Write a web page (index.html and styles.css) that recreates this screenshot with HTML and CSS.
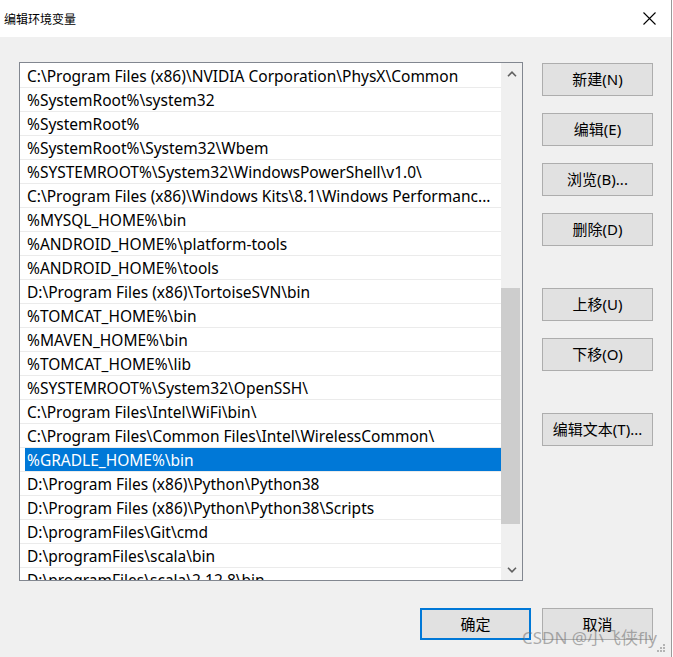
FILE: index.html
```html
<!DOCTYPE html>
<html lang="zh-CN">
<head>
<meta charset="utf-8">
<title>编辑环境变量</title>
<link rel="stylesheet" href="styles.css">
</head>
<body>
<div class="window">
  <div class="titlebar">
    <span class="title">编辑环境变量</span>
    <span class="close">
      <svg width="13" height="13" viewBox="0 0 13 13"><path d="M0.5 0.5 L12.5 12.5 M12.5 0.5 L0.5 12.5" stroke="#000" stroke-width="1.1" fill="none"/></svg>
    </span>
  </div>
  <div class="content">
    <div class="main">
      <div class="listbox">
        <div class="rows">
          <div class="row"><span class="cell">C:\Program Files (x86)\NVIDIA Corporation\PhysX\Common</span></div>
          <div class="row"><span class="cell">%SystemRoot%\system32</span></div>
          <div class="row"><span class="cell">%SystemRoot%</span></div>
          <div class="row"><span class="cell">%SystemRoot%\System32\Wbem</span></div>
          <div class="row"><span class="cell">%SYSTEMROOT%\System32\WindowsPowerShell\v1.0\</span></div>
          <div class="row"><span class="cell">C:\Program Files (x86)\Windows Kits\8.1\Windows Performanc...</span></div>
          <div class="row"><span class="cell">%MYSQL_HOME%\bin</span></div>
          <div class="row"><span class="cell">%ANDROID_HOME%\platform-tools</span></div>
          <div class="row"><span class="cell">%ANDROID_HOME%\tools</span></div>
          <div class="row"><span class="cell">D:\Program Files (x86)\TortoiseSVN\bin</span></div>
          <div class="row"><span class="cell">%TOMCAT_HOME%\bin</span></div>
          <div class="row"><span class="cell">%MAVEN_HOME%\bin</span></div>
          <div class="row"><span class="cell">%TOMCAT_HOME%\lib</span></div>
          <div class="row"><span class="cell">%SYSTEMROOT%\System32\OpenSSH\</span></div>
          <div class="row"><span class="cell">C:\Program Files\Intel\WiFi\bin\</span></div>
          <div class="row"><span class="cell">C:\Program Files\Common Files\Intel\WirelessCommon\</span></div>
          <div class="row selected"><span class="cell">%GRADLE_HOME%\bin</span></div>
          <div class="row"><span class="cell">D:\Program Files (x86)\Python\Python38</span></div>
          <div class="row"><span class="cell">D:\Program Files (x86)\Python\Python38\Scripts</span></div>
          <div class="row"><span class="cell">D:\programFiles\Git\cmd</span></div>
          <div class="row"><span class="cell">D:\programFiles\scala\bin</span></div>
          <div class="row"><span class="cell">D:\programFiles\scala\2.12.8\bin</span></div>
        </div>
        <div class="scrollbar">
          <div class="sb-btn">
            <svg width="10" height="6" viewBox="0 0 10 6"><path d="M1 5.2 L5 1.2 L9 5.2" stroke="#606060" stroke-width="1.6" fill="none"/></svg>
          </div>
          <div class="sb-track"><div class="sb-thumb"></div></div>
          <div class="sb-btn">
            <svg width="10" height="6" viewBox="0 0 10 6"><path d="M1 0.8 L5 4.8 L9 0.8" stroke="#606060" stroke-width="1.6" fill="none"/></svg>
          </div>
        </div>
      </div>
      <div class="side">
        <div class="group">
          <button class="btn">新建(N)</button>
          <button class="btn">编辑(E)</button>
          <button class="btn">浏览(B)...</button>
          <button class="btn">删除(D)</button>
        </div>
        <div class="group">
          <button class="btn">上移(U)</button>
          <button class="btn">下移(O)</button>
        </div>
        <div class="group">
          <button class="btn">编辑文本(T)...</button>
        </div>
      </div>
    </div>
    <div class="footer">
      <button class="btn default">确定</button>
      <button class="btn">取消</button>
    </div>
    <div class="watermark">CSDN @小飞侠fly</div>
    <svg class="grip" width="8" height="8" viewBox="0 0 8 8">
      <rect x="6" y="0" width="2" height="2" fill="#b4b4b4"/>
      <rect x="3" y="3" width="2" height="2" fill="#b4b4b4"/>
      <rect x="6" y="3" width="2" height="2" fill="#b4b4b4"/>
      <rect x="0" y="6" width="2" height="2" fill="#b4b4b4"/>
      <rect x="3" y="6" width="2" height="2" fill="#b4b4b4"/>
      <rect x="6" y="6" width="2" height="2" fill="#b4b4b4"/>
    </svg>
  </div>
</div>
</body>
</html>
```
FILE: styles.css
```css
* { box-sizing: border-box; }
html, body {
  margin: 0;
  padding: 0;
  background: #ffffff;
}
body {
  font-family: "Noto Sans", "Noto Sans CJK SC", sans-serif;
  font-size: 15px;
  color: #000;
}
.window {
  width: 672px;
  height: 657px;
  border-right: 1px solid #9a9a9a;
  display: flex;
  flex-direction: column;
  overflow: hidden;
}
.titlebar {
  height: 37px;
  flex: none;
  background: #fff;
  display: flex;
  align-items: center;
  justify-content: space-between;
  padding-left: 4px;
}
.title {
  font-family: "Noto Sans CJK SC", sans-serif;
  font-size: 12px;
  line-height: 1;
  margin-top: 1px;
}
.close {
  width: 46px;
  height: 37px;
  display: flex;
  align-items: center;
  justify-content: center;
  margin-right: 0;
}
.close svg { display: block; margin-left: 3px; }
.content {
  flex: 1;
  background: #f0f0f0;
  position: relative;
  display: flex;
  flex-direction: column;
}
.main {
  display: flex;
  padding: 25px 0 0 19px;
  gap: 19px;
}
.listbox {
  width: 504px;
  height: 519px;
  border: 1px solid #828790;
  background: #fff;
  display: flex;
  overflow: hidden;
}
.rows {
  width: 481px;
  padding-top: 1px;
  overflow: hidden;
}
.row {
  height: 24px;
  border-bottom: 1px solid #ebebeb;
  padding-left: 5px;
  white-space: nowrap;
}
.cell {
  display: block;
  height: 23px;
  line-height: 25px;
  padding-left: 2px;
  font-size: 15.5px;
  overflow: hidden;
}
.row.selected .cell {
  background: #0078d7;
  color: #fff;
}
.scrollbar {
  width: 21px;
  background: #f0f0f0;
  display: flex;
  flex-direction: column;
}
.sb-btn {
  height: 21px;
  display: flex;
  align-items: center;
  justify-content: center;
}
.sb-btn svg { display: block; }
.sb-track {
  flex: 1;
}
.sb-thumb {
  margin-top: 204px;
  height: 236px;
  width: 19px;
  background: #cdcdcd;
}
.side {
  display: flex;
  flex-direction: column;
  gap: 42px;
  padding-top: 1px;
}
.group {
  display: flex;
  flex-direction: column;
  gap: 17px;
}
.btn {
  width: 111px;
  height: 33px;
  background: #e1e1e1;
  border: 1px solid #adadad;
  font-family: "Noto Sans", "Noto Sans CJK SC", sans-serif;
  font-size: 15px;
  color: #000;
  padding: 0;
  margin: 0;
  line-height: 1;
}
.footer {
  display: flex;
  justify-content: flex-end;
  gap: 11px;
  margin-top: 27px;
  padding-right: 18px;
}
.footer .btn { height: 32px; }
.btn.default {
  border: 2px solid #0078d7;
}
.watermark {
  position: absolute;
  left: 522px;
  top: 587px;
  font-family: "Noto Sans", "Noto Sans CJK SC", sans-serif;
  font-size: 17px;
  color: rgba(110, 110, 110, 0.55);
  white-space: nowrap;
}
.grip {
  position: absolute;
  right: 6px;
  bottom: 5px;
}
```
